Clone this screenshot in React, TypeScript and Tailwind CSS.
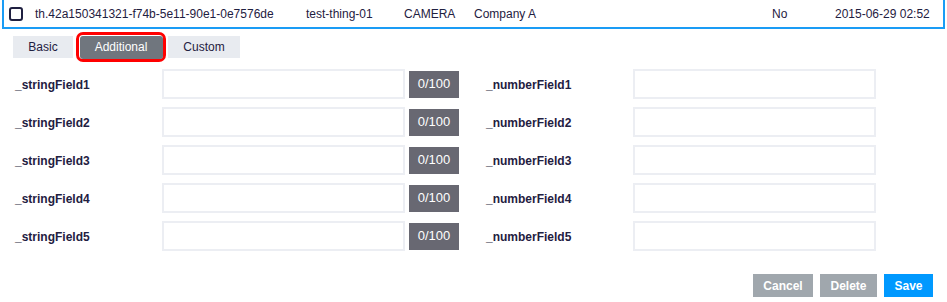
import React from "react";

const font = { fontFamily: '"Liberation Sans", Arial, sans-serif' };

const stringFields = ["_stringField1", "_stringField2", "_stringField3", "_stringField4", "_stringField5"];
const numberFields = ["_numberField1", "_numberField2", "_numberField3", "_numberField4", "_numberField5"];

const HeaderRow: React.FC = () => (
  <div className="mx-[2px] -mt-[2px] flex h-[31px] items-center border-2 border-[#1a9cf5] text-[12px] text-[#1f2041]">
    <div className="flex w-[31px] shrink-0 items-center pl-[5px]">
      <span className="block h-[14px] w-[14px] rounded-[3px] border-2 border-[#1f2041]" />
    </div>
    <div className="w-[271px] shrink-0">th.42a150341321-f74b-5e11-90e1-0e7576de</div>
    <div className="w-[98px] shrink-0">test-thing-01</div>
    <div className="w-[70px] shrink-0">CAMERA</div>
    <div className="w-[298px] shrink-0">Company A</div>
    <div className="w-[63px] shrink-0">No</div>
    <div className="shrink-0">2015-06-29 02:52</div>
  </div>
);

const Tabs: React.FC = () => (
  <div className="ml-[13px] mt-[3px] flex h-[30px] items-center text-[12px] text-[#1f2041]">
    <button className="flex h-[22px] w-[60px] items-center justify-center bg-[#e8ebf0]">Basic</button>
    <div className="ml-[3px] flex h-[30px] w-[90px] items-center justify-center rounded-[7px] border-[3px] border-[#ff0000]">
      <button className="flex h-[23px] w-[83px] items-center justify-center rounded-[3px] bg-[#70767e] text-white">
        Additional
      </button>
    </div>
    <button className="ml-[2px] flex h-[22px] w-[72px] items-center justify-center bg-[#e8ebf0]">Custom</button>
  </div>
);

const Field: React.FC<{ label: string; counter?: boolean }> = ({ label, counter }) => (
  <div className="flex h-[30px] items-center">
    <label className="w-[147px] shrink-0 pt-[1px] text-[12px] font-bold text-[#1f2041]">{label}</label>
    <input className="h-[30px] w-[243px] shrink-0 border-2 border-[#eceef3] bg-white outline-none" />
    {counter && (
      <span className="ml-[4px] flex h-[27px] w-[50px] items-center justify-center bg-[#686872] text-[13px] text-white">
        0/100
      </span>
    )}
  </div>
);

export default function App() {
  return (
    <div className="h-[302px] w-[947px] overflow-hidden bg-white" style={font}>
      <HeaderRow />
      <Tabs />
      <div className="mt-[7px] flex pl-[15px]">
        <div className="flex w-[471px] flex-col gap-[8px]">
          {stringFields.map((f) => (
            <Field key={f} label={f} counter />
          ))}
        </div>
        <div className="flex flex-col gap-[8px]">
          {numberFields.map((f) => (
            <Field key={f} label={f} />
          ))}
        </div>
      </div>
      <div className="mt-[23px] flex justify-end gap-[7px] pr-[14px] text-[12px] font-bold text-white">
        <button className="h-[23px] w-[60px] bg-[#a0a7ad]">Cancel</button>
        <button className="h-[23px] w-[57px] bg-[#a0a7ad]">Delete</button>
        <button className="h-[23px] w-[49px] bg-[#0099ff]">Save</button>
      </div>
    </div>
  );
}
